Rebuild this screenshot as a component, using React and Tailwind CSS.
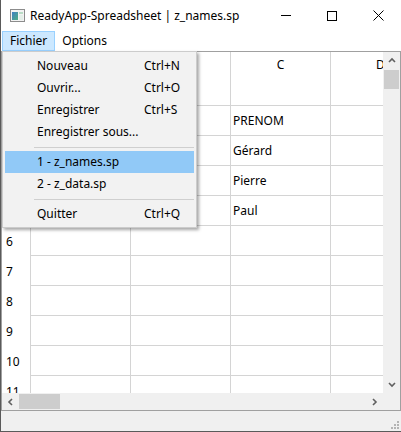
import React from "react";

const rows = [
  { n: 1, c: "" },
  { n: 2, c: "PRENOM" },
  { n: 3, c: "Gérard" },
  { n: 4, c: "Pierre" },
  { n: 5, c: "Paul" },
  { n: 6, c: "" },
  { n: 7, c: "" },
  { n: 8, c: "" },
  { n: 9, c: "" },
  { n: 10, c: "" },
  { n: 11, c: "" },
];

const menuItems = [
  { label: "Nouveau", key: "Ctrl+N" },
  { label: "Ouvrir...", key: "Ctrl+O" },
  { label: "Enregistrer", key: "Ctrl+S" },
  { label: "Enregistrer sous..." },
  { sep: true },
  { label: "1 - z_names.sp", active: true },
  { label: "2 - z_data.sp" },
  { sep: true },
  { label: "Quitter", key: "Ctrl+Q" },
];

function AppIcon() {
  return (
    <svg width="15" height="13" viewBox="0 0 15 13">
      <defs>
        <linearGradient id="ic" x1="0" y1="0" x2="1" y2="1">
          <stop offset="0" stopColor="#3f7fc4" />
          <stop offset="1" stopColor="#4fae83" />
        </linearGradient>
      </defs>
      <rect x="0.5" y="0.5" width="14" height="12" fill="#f3f3f3" stroke="#8c8c8c" />
      <rect x="2" y="3" width="6" height="8" fill="url(#ic)" />
      <rect x="9" y="3" width="4" height="2" fill="#b9dcc5" />
      <rect x="9" y="6" width="4" height="5" fill="#e4efe8" />
    </svg>
  );
}

function Chevron({ dir }) {
  const d = {
    up: "M1 5 L4 2 L7 5",
    down: "M1 2 L4 5 L7 2",
    left: "M5 1 L2 4 L5 7",
    right: "M2 1 L5 4 L2 7",
  }[dir];
  const w = dir === "up" || dir === "down" ? 8 : 7;
  const h = dir === "up" || dir === "down" ? 7 : 8;
  return (
    <svg width={w} height={h} viewBox={`0 0 ${w} ${h}`}>
      <path d={d} fill="none" stroke="#606060" strokeWidth="1.6" />
    </svg>
  );
}

export default function App() {
  return (
    <div className="w-[401px] h-[432px] flex flex-col bg-white border-l border-b border-[#5a5a5a] font-['Noto_Sans',sans-serif] text-[12px] text-black relative overflow-hidden">
      {/* title bar */}
      <div className="h-[31px] flex items-center shrink-0">
        <div className="w-[29px] pl-[9px] flex items-center">
          <AppIcon />
        </div>
        <div className="flex-1 leading-none pt-px">ReadyApp-Spreadsheet | z_names.sp</div>
        <div className="flex h-full">
          <div className="w-[46px] flex items-center justify-center">
            <div className="w-[10px] h-px bg-black" />
          </div>
          <div className="w-[46px] flex items-center justify-center">
            <div className="w-[10px] h-[10px] border border-black" />
          </div>
          <div className="w-[46px] flex items-center justify-center">
            <svg width="11" height="11" viewBox="0 0 11 11">
              <path d="M0.5 0.5 L10.5 10.5 M10.5 0.5 L0.5 10.5" stroke="#000" strokeWidth="1" />
            </svg>
          </div>
        </div>
      </div>

      {/* menu bar */}
      <div className="h-[20px] flex items-stretch shrink-0">
        <div className="ml-[1px] px-[7px] flex items-center bg-[#cce8ff] border border-[#99d1ff]">Fichier</div>
        <div className="px-[7px] flex items-center">Options</div>
      </div>

      {/* table */}
      <div className="flex-1 border border-[#a0a0a0] flex flex-col min-h-0">
        <div className="flex flex-1 min-h-0">
          <div className="flex-1 overflow-hidden">
            <div className="flex h-[24px]">
              <div className="w-[29px] shrink-0 border-r border-[#d4d4d4]" />
              {["A", "B", "C", "D"].map((h) => (
                <div key={h} className="w-[100px] shrink-0 border-r border-[#d4d4d4] flex justify-center pt-[4px]">
                  {h}
                </div>
              ))}
            </div>
            {rows.map((r) => (
              <div key={r.n} className="flex h-[30px]">
                <div className="w-[29px] shrink-0 border-r border-[#d4d4d4] flex items-center pl-[4px] pt-[2px]">{r.n}</div>
                <div className="w-[100px] shrink-0 border-r border-b border-[#d4d4d4]" />
                <div className="w-[100px] shrink-0 border-r border-b border-[#d4d4d4]" />
                <div className="w-[100px] shrink-0 border-r border-b border-[#d4d4d4] flex items-center pl-[2px]">{r.c}</div>
                <div className="w-[100px] shrink-0 border-r border-b border-[#d4d4d4]" />
              </div>
            ))}
          </div>
          {/* vertical scrollbar */}
          <div className="w-[17px] bg-[#f0f0f0] flex flex-col shrink-0">
            <div className="h-[17px] flex items-center justify-center">
              <Chevron dir="up" />
            </div>
            <div className="h-[19px] mt-[1px] mx-px bg-[#cdcdcd]" />
            <div className="flex-1" />
            <div className="h-[17px] flex items-center justify-center">
              <Chevron dir="down" />
            </div>
          </div>
        </div>
        {/* horizontal scrollbar */}
        <div className="h-[17px] flex shrink-0">
          <div className="flex-1 bg-[#f0f0f0] flex items-center">
            <div className="w-[17px] h-full flex items-center justify-center">
              <Chevron dir="left" />
            </div>
            <div className="w-[41px] h-[15px] bg-[#cdcdcd]" />
            <div className="flex-1" />
            <div className="w-[17px] h-full flex items-center justify-center">
              <Chevron dir="right" />
            </div>
          </div>
          <div className="w-[17px] bg-[#f0f0f0]" />
        </div>
      </div>

      {/* status bar */}
      <div className="h-[20px] bg-[#f0f0f0] flex justify-end items-end shrink-0">
        <svg width="10" height="10" viewBox="0 0 10 10" className="mr-[1px] mb-[1px]">
          <rect x="7" y="1" width="2" height="2" fill="#b4b4b4" />
          <rect x="4" y="4" width="2" height="2" fill="#b4b4b4" />
          <rect x="7" y="4" width="2" height="2" fill="#b4b4b4" />
          <rect x="1" y="7" width="2" height="2" fill="#b4b4b4" />
          <rect x="4" y="7" width="2" height="2" fill="#b4b4b4" />
          <rect x="7" y="7" width="2" height="2" fill="#b4b4b4" />
        </svg>
      </div>

      {/* dropdown menu */}
      <div className="absolute left-[1px] top-[51px] w-[195px] bg-[#f2f2f2] border border-[#cccccc] pt-[3px] pb-[2px] px-[2px] shadow-[2px_2px_3px_rgba(0,0,0,0.35)]">
        {menuItems.map((m, i) =>
          m.sep ? (
            <div key={i} className="h-[8px] flex items-center pl-[29px]">
              <div className="w-full h-px bg-[#cfcfcf]" />
            </div>
          ) : (
            <div key={i} className={`h-[22px] flex items-center pl-[32px] ${m.active ? "bg-[#91c9f7]" : ""}`}>
              <span className="w-[107px]">{m.label}</span>
              <span>{m.key}</span>
            </div>
          )
        )}
      </div>
    </div>
  );
}
